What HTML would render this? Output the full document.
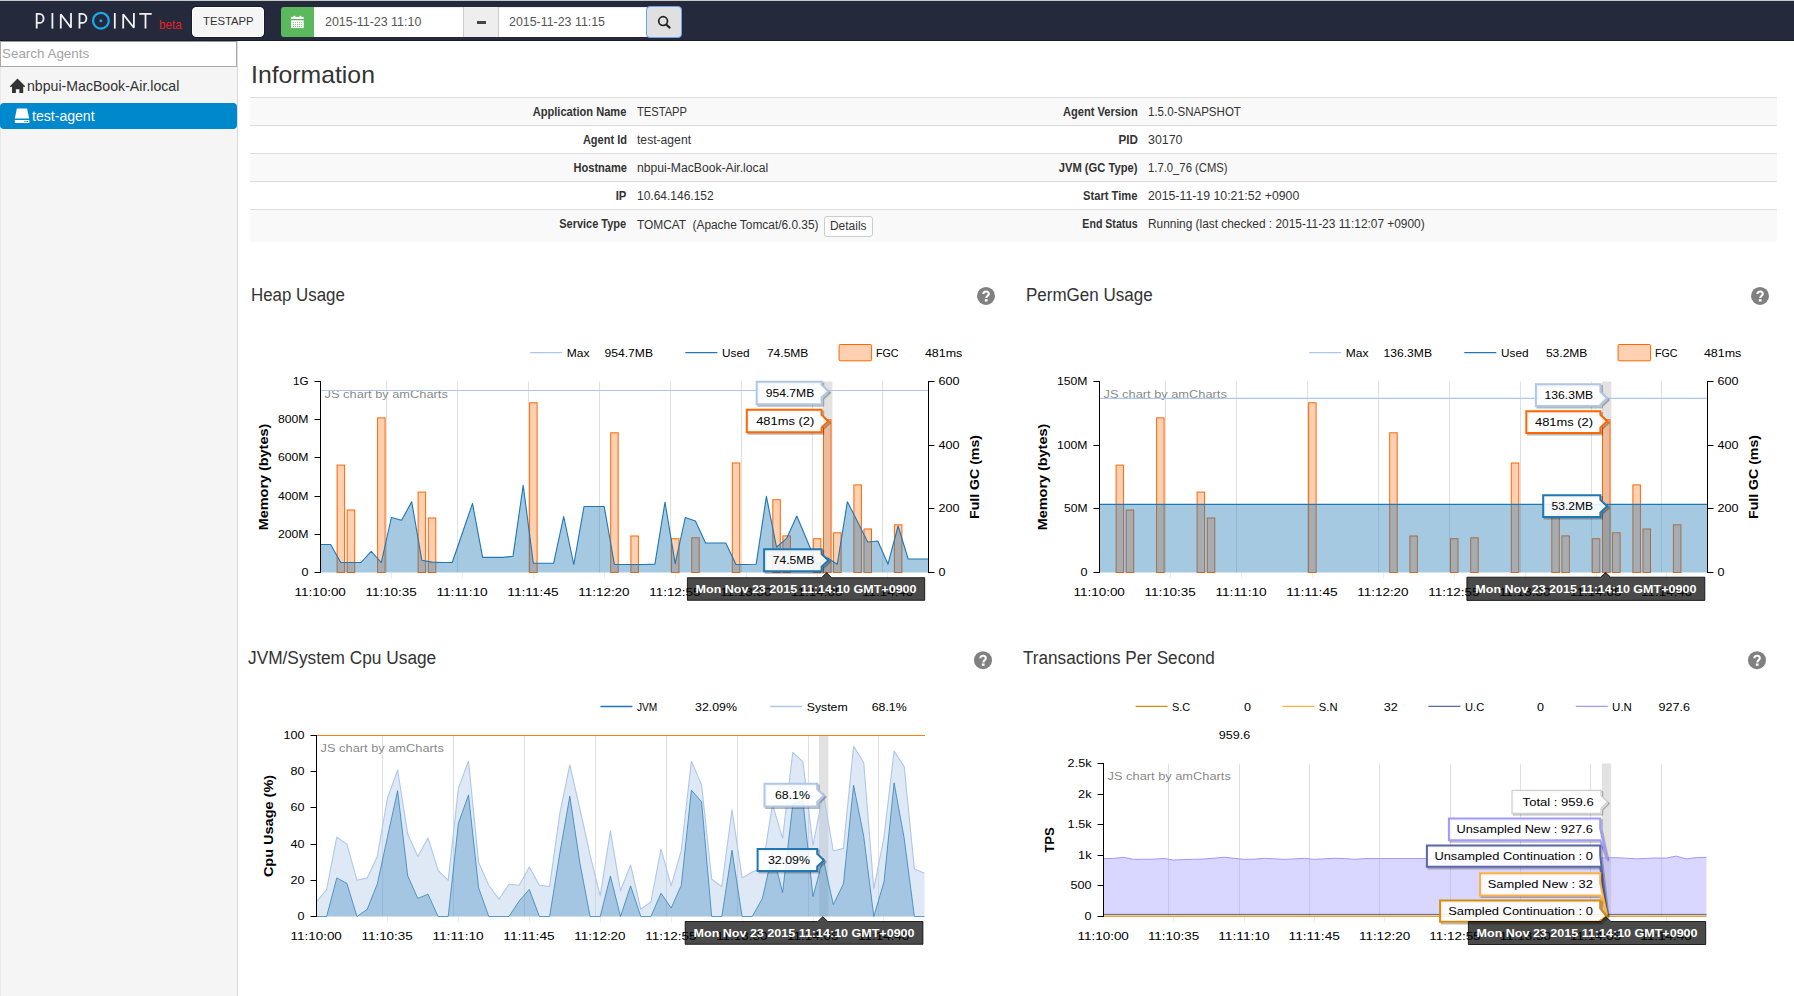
<!DOCTYPE html>
<html lang="en"><head><meta charset="utf-8"><title>Pinpoint - Inspector</title>
<style>
*{box-sizing:border-box}
html,body{margin:0;padding:0}
body{width:1794px;height:996px;overflow:hidden;position:relative;background:#fff;font-family:"Liberation Sans",sans-serif;color:#333}
.t{position:absolute;white-space:pre;line-height:1;font-family:"Liberation Sans",sans-serif}
.abs{position:absolute}
svg{position:absolute;left:0;top:0;overflow:visible}
svg text{font-family:"Liberation Sans",sans-serif}
#nav{position:absolute;left:0;top:0;width:1794px;height:41px;background:#24293b;border-top:1px solid #c9c9c9;border-bottom:1px solid #161b2e}
#side{position:absolute;left:0;top:41px;width:238px;height:955px;background:#f5f5f5;border-right:1px solid #dcdcdc;border-left:1px solid #e9e9e9}
.row{position:absolute;left:250px;width:1527px;border-top:1px solid #ddd}
.odd{background:#f9f9f9}
</style></head><body>

<div id="nav"></div>
<svg width="1794" height="41" viewBox="0 0 1794 41">
<g fill="none" stroke="#f2f2f2" stroke-width="1.8" stroke-linecap="butt" stroke-linejoin="bevel">
<path stroke-linejoin="miter" d="M36.7 28.6V13.9h2.6a4.3 4.5 0 0 1 0 9h-2.6"/>
<path d="M52.4 13V28.6"/>
<path d="M60.8 28.6V14.2l10.2 13.6V13"/>
<path stroke-linejoin="miter" d="M79.5 28.6V13.9h2.6a4.3 4.5 0 0 1 0 9h-2.6"/>
<path d="M114.8 13V28.6"/>
<path d="M123.2 28.6V14.2l10.7 13.6V13"/>
<path d="M139.3 13.9h12.4M145.5 13.9V28.6"/>
</g>
<circle cx="100.9" cy="20.7" r="7.9" fill="none" stroke="#1ea7ee" stroke-width="2.2"/>
<circle cx="100.9" cy="20.7" r="1.5" fill="#1ea7ee"/>
</svg>
<span class="t" style="left:158.60px;transform-origin:0 0;top:18.96px;font-size:12.8px;transform:scaleX(0.9153);color:#e02626;">beta</span>
<div class="abs" style="left:192px;top:7px;width:72px;height:30px;background:#f5f5f5;border:1px solid #fff;border-radius:4px;box-shadow:0 0 0 1px rgba(8,12,30,.45)"></div>
<span class="t" style="left:202.60px;transform-origin:0 0;top:16.11px;font-size:11.8px;transform:scaleX(0.9566);color:#333;">TESTAPP</span>
<div class="abs" style="left:281px;top:7px;width:33px;height:30px;background:#5cb85c;border-radius:3px 0 0 3px"></div>
<svg width="1794" height="41" viewBox="0 0 1794 41">
<g fill="#fff">
<rect x="291.1" y="16.9" width="12.6" height="2.1"/>
<rect x="293.4" y="15.8" width="2" height="2" rx=".6"/><rect x="299.4" y="15.8" width="2" height="2" rx=".6"/>
<rect x="291.1" y="20.3" width="12.6" height="7.8"/>
</g>
<g fill="#7cc67c">

<rect x="292.90" y="22.10" width="1" height="1"/>
<rect x="294.95" y="22.10" width="1" height="1"/>
<rect x="297.00" y="22.10" width="1" height="1"/>
<rect x="299.05" y="22.10" width="1" height="1"/>
<rect x="301.10" y="22.10" width="1" height="1"/>
<rect x="292.90" y="24.05" width="1" height="1"/>
<rect x="294.95" y="24.05" width="1" height="1"/>
<rect x="297.00" y="24.05" width="1" height="1"/>
<rect x="299.05" y="24.05" width="1" height="1"/>
<rect x="301.10" y="24.05" width="1" height="1"/>
<rect x="292.90" y="26.00" width="1" height="1"/>
<rect x="294.95" y="26.00" width="1" height="1"/>
<rect x="297.00" y="26.00" width="1" height="1"/>
<rect x="299.05" y="26.00" width="1" height="1"/>
<rect x="301.10" y="26.00" width="1" height="1"/>
</g></svg>
<div class="abs" style="left:314px;top:7px;width:150px;height:30px;background:#fff;box-shadow:inset 0 1px 1px rgba(0,0,0,.09)"></div>
<span class="t" style="left:324.90px;transform-origin:0 0;top:16.04px;font-size:12px;transform:scaleX(1.036);color:#555;">2015-11-23 11:10</span>
<div class="abs" style="left:463px;top:7px;width:36px;height:30px;background:#eee;border-left:1px solid #ccc;border-right:1px solid #ccc"></div>
<div class="abs" style="left:476.7px;top:21.1px;width:9.2px;height:2.8px;background:#444"></div>
<div class="abs" style="left:499px;top:7px;width:148px;height:30px;background:#fff;box-shadow:inset 0 1px 1px rgba(0,0,0,.09)"></div>
<span class="t" style="left:509.00px;transform-origin:0 0;top:16.04px;font-size:12px;transform:scaleX(1.0328);color:#555;">2015-11-23 11:15</span>
<div class="abs" style="left:646.3px;top:6.2px;width:35.3px;height:31.5px;background:#e0e0e0;border:1.6px solid #6ea0f0;border-radius:4px"></div>
<svg width="1794" height="41" viewBox="0 0 1794 41"><circle cx="663.1" cy="21.1" r="4.4" fill="none" stroke="#222" stroke-width="1.7"/><path d="M666.2 24.5L669.6 27.6" stroke="#222" stroke-width="2.1" stroke-linecap="round"/></svg>
<div id="side"></div>
<div class="abs" style="left:0;top:41px;width:237px;height:26px;background:#fff;border:1px solid #a9a9a9;border-top-color:#9a9a9a"></div>
<span class="t" style="left:1.90px;transform-origin:0 0;top:47.29px;font-size:13.6px;transform:scaleX(0.9858);color:#a3a3a3;">Search Agents</span>
<svg width="240" height="140" viewBox="0 0 240 140"><path fill="#333" d="M17.5 78.6L25.2 86.3L24.2 87.3L23.2 86.4V93.1H19.4V89.3H15.9V93.1H12V86.4L10.9 87.3L9.9 86.3Z"/></svg>
<span class="t" style="left:27.20px;transform-origin:0 0;top:79.35px;font-size:14px;transform:scaleX(1.0089);color:#333;">nbpui-MacBook-Air.local</span>
<div class="abs" style="left:0;top:103px;width:237px;height:26px;background:#0088cc;border-radius:4px"></div>
<svg width="240" height="140" viewBox="0 0 240 140"><g fill="#fff"><path d="M16.9 108.5H27L29.2 118.6H14.8Z"/><rect x="14.8" y="120.1" width="14.6" height="2.8" rx=".5"/></g><rect x="24.3" y="121" width="1.4" height="1" fill="#0088cc"/><rect x="26.6" y="121" width="1.4" height="1" fill="#0088cc"/></svg>
<span class="t" style="left:32.40px;transform-origin:0 0;top:109.15px;font-size:14px;transform:scaleX(1.0055);color:#fff;">test-agent</span>
<span class="t" style="left:250.70px;transform-origin:0 0;top:62.78px;font-size:24px;transform:scaleX(1.0321);color:#333;">Information</span>
<div class="row odd" style="top:97px;height:28px"></div>
<div class="row" style="top:125px;height:28px"></div>
<div class="row odd" style="top:153px;height:28px"></div>
<div class="row" style="top:181px;height:28px"></div>
<div class="row odd" style="top:209px;height:33px"></div>
<span class="t" style="right:1167.40px;transform-origin:100% 0;top:105.74px;font-size:12px;transform:scaleX(0.9236);color:#333;font-weight:bold;">Application Name</span>
<span class="t" style="left:637.30px;transform-origin:0 0;top:105.74px;font-size:12px;transform:scaleX(0.9295);color:#333;">TESTAPP</span>
<span class="t" style="right:656.40px;transform-origin:100% 0;top:105.74px;font-size:12px;transform:scaleX(0.9271);color:#333;font-weight:bold;">Agent Version</span>
<span class="t" style="left:1148.30px;transform-origin:0 0;top:105.74px;font-size:12px;transform:scaleX(0.9607);color:#333;">1.5.0-SNAPSHOT</span>
<span class="t" style="right:1167.40px;transform-origin:100% 0;top:133.74px;font-size:12px;transform:scaleX(0.9189);color:#333;font-weight:bold;">Agent Id</span>
<span class="t" style="left:637.30px;transform-origin:0 0;top:133.74px;font-size:12px;transform:scaleX(1.0119);color:#333;">test-agent</span>
<span class="t" style="right:656.40px;transform-origin:100% 0;top:133.74px;font-size:12px;transform:scaleX(0.9698);color:#333;font-weight:bold;">PID</span>
<span class="t" style="left:1148.30px;transform-origin:0 0;top:133.74px;font-size:12px;transform:scaleX(1.034);color:#333;">30170</span>
<span class="t" style="right:1167.40px;transform-origin:100% 0;top:161.74px;font-size:12px;transform:scaleX(0.9222);color:#333;font-weight:bold;">Hostname</span>
<span class="t" style="left:637.30px;transform-origin:0 0;top:161.74px;font-size:12px;transform:scaleX(1.0132);color:#333;">nbpui-MacBook-Air.local</span>
<span class="t" style="right:656.40px;transform-origin:100% 0;top:161.74px;font-size:12px;transform:scaleX(0.932);color:#333;font-weight:bold;">JVM (GC Type)</span>
<span class="t" style="left:1148.30px;transform-origin:0 0;top:161.74px;font-size:12px;transform:scaleX(0.9398);color:#333;">1.7.0_76 (CMS)</span>
<span class="t" style="right:1167.40px;transform-origin:100% 0;top:189.74px;font-size:12px;transform:scaleX(0.9437);color:#333;font-weight:bold;">IP</span>
<span class="t" style="left:637.30px;transform-origin:0 0;top:189.74px;font-size:12px;transform:scaleX(0.9996);color:#333;">10.64.146.152</span>
<span class="t" style="right:656.40px;transform-origin:100% 0;top:189.74px;font-size:12px;transform:scaleX(0.9305);color:#333;font-weight:bold;">Start Time</span>
<span class="t" style="left:1148.30px;transform-origin:0 0;top:189.74px;font-size:12px;transform:scaleX(1.0253);color:#333;">2015-11-19 10:21:52 +0900</span>
<span class="t" style="right:1167.40px;transform-origin:100% 0;top:217.94px;font-size:12px;transform:scaleX(0.9146);color:#333;font-weight:bold;">Service Type</span>
<span class="t" style="left:637.30px;transform-origin:0 0;top:219.14px;font-size:12px;transform:scaleX(0.9909);color:#333;">TOMCAT  (Apache Tomcat/6.0.35)</span>
<span class="t" style="right:656.40px;transform-origin:100% 0;top:217.94px;font-size:12px;transform:scaleX(0.8824);color:#333;font-weight:bold;">End Status</span>
<span class="t" style="left:1148.30px;transform-origin:0 0;top:217.94px;font-size:12px;transform:scaleX(0.99);color:#333;">Running (last checked : 2015-11-23 11:12:07 +0900)</span>
<div class="abs" style="left:824px;top:216px;width:49px;height:21px;background:#fff;border:1px solid #ccc;border-radius:3px"></div>
<span class="t" style="left:830.20px;transform-origin:0 0;top:220.04px;font-size:12px;transform:scaleX(0.9951);color:#333;">Details</span>
<span class="t" style="left:251.00px;transform-origin:0 0;top:285.66px;font-size:18px;transform:scaleX(0.9375);color:#333;">Heap Usage</span>
<span class="t" style="left:1025.50px;transform-origin:0 0;top:285.66px;font-size:18px;transform:scaleX(0.9444);color:#333;">PermGen Usage</span>
<span class="t" style="left:248.30px;transform-origin:0 0;top:649.36px;font-size:18px;transform:scaleX(0.9599);color:#333;">JVM/System Cpu Usage</span>
<span class="t" style="left:1023.20px;transform-origin:0 0;top:649.36px;font-size:18px;transform:scaleX(0.9522);color:#333;">Transactions Per Second</span>
<svg width="1794" height="996" viewBox="0 0 1794 996"><circle cx="986" cy="295.9" r="9" fill="#808080"/><path d="M983.4 294.0A2.7 2.5 0 0 1 988.8 294.0C988.8 295.7 986.3 296.0 986.3 298.1" fill="none" stroke="#fff" stroke-width="2.1"/><rect x="984.8" y="299.2" width="2.8" height="2.3" fill="#fff"/></svg>
<svg width="1794" height="996" viewBox="0 0 1794 996"><circle cx="1760" cy="295.9" r="9" fill="#808080"/><path d="M1757.4 294.0A2.7 2.5 0 0 1 1762.8 294.0C1762.8 295.7 1760.3 296.0 1760.3 298.1" fill="none" stroke="#fff" stroke-width="2.1"/><rect x="1758.8" y="299.2" width="2.8" height="2.3" fill="#fff"/></svg>
<svg width="1794" height="996" viewBox="0 0 1794 996"><circle cx="983" cy="660.2" r="9" fill="#808080"/><path d="M980.4 658.3A2.7 2.5 0 0 1 985.8 658.3C985.8 660.0 983.3 660.3 983.3 662.4" fill="none" stroke="#fff" stroke-width="2.1"/><rect x="981.8" y="663.5" width="2.8" height="2.3" fill="#fff"/></svg>
<svg width="1794" height="996" viewBox="0 0 1794 996"><circle cx="1757" cy="660.2" r="9" fill="#808080"/><path d="M1754.4 658.3A2.7 2.5 0 0 1 1759.8 658.3C1759.8 660.0 1757.3 660.3 1757.3 662.4" fill="none" stroke="#fff" stroke-width="2.1"/><rect x="1755.8" y="663.5" width="2.8" height="2.3" fill="#fff"/></svg>
<svg width="1794" height="996" viewBox="0 0 1794 996">
<path d="M386.5 381.5V572.5" stroke="#000" stroke-opacity=".12" stroke-width="1"/>
<path d="M391.5 572.5V578.5" stroke="#000" stroke-opacity=".07" stroke-width="1"/>
<path d="M457.5 381.5V572.5" stroke="#000" stroke-opacity=".12" stroke-width="1"/>
<path d="M462.5 572.5V578.5" stroke="#000" stroke-opacity=".07" stroke-width="1"/>
<path d="M528.5 381.5V572.5" stroke="#000" stroke-opacity=".12" stroke-width="1"/>
<path d="M533.5 572.5V578.5" stroke="#000" stroke-opacity=".07" stroke-width="1"/>
<path d="M599.5 381.5V572.5" stroke="#000" stroke-opacity=".12" stroke-width="1"/>
<path d="M604.5 572.5V578.5" stroke="#000" stroke-opacity=".07" stroke-width="1"/>
<path d="M670.5 381.5V572.5" stroke="#000" stroke-opacity=".12" stroke-width="1"/>
<path d="M675.5 572.5V578.5" stroke="#000" stroke-opacity=".07" stroke-width="1"/>
<path d="M741.5 381.5V572.5" stroke="#000" stroke-opacity=".12" stroke-width="1"/>
<path d="M746.5 572.5V578.5" stroke="#000" stroke-opacity=".07" stroke-width="1"/>
<path d="M812.5 381.5V572.5" stroke="#000" stroke-opacity=".12" stroke-width="1"/>
<path d="M817.5 572.5V578.5" stroke="#000" stroke-opacity=".07" stroke-width="1"/>
<path d="M882.5 381.5V572.5" stroke="#000" stroke-opacity=".12" stroke-width="1"/>
<path d="M887.5 572.5V578.5" stroke="#000" stroke-opacity=".07" stroke-width="1"/>
<text x="324.60" y="397.80" font-size="11.4" text-anchor="start" textLength="123.20" lengthAdjust="spacingAndGlyphs" fill="#000" fill-opacity="0.5">JS chart by amCharts</text>
<rect x="823.0" y="381.5" width="9.4" height="191.0" fill="#000" fill-opacity=".115"/>
<rect x="337.1" y="465.1" width="7.5" height="107.4" fill="#ff6600" fill-opacity=".3" stroke="#ff6600" stroke-width="1"/>
<rect x="347.2" y="510.0" width="7.5" height="62.5" fill="#ff6600" fill-opacity=".3" stroke="#ff6600" stroke-width="1"/>
<rect x="377.6" y="417.9" width="7.5" height="154.6" fill="#ff6600" fill-opacity=".3" stroke="#ff6600" stroke-width="1"/>
<rect x="418.1" y="492.1" width="7.5" height="80.4" fill="#ff6600" fill-opacity=".3" stroke="#ff6600" stroke-width="1"/>
<rect x="428.3" y="518.0" width="7.5" height="54.5" fill="#ff6600" fill-opacity=".3" stroke="#ff6600" stroke-width="1"/>
<rect x="529.6" y="402.8" width="7.5" height="169.7" fill="#ff6600" fill-opacity=".3" stroke="#ff6600" stroke-width="1"/>
<rect x="610.7" y="432.8" width="7.5" height="139.7" fill="#ff6600" fill-opacity=".3" stroke="#ff6600" stroke-width="1"/>
<rect x="630.9" y="536.0" width="7.5" height="36.5" fill="#ff6600" fill-opacity=".3" stroke="#ff6600" stroke-width="1"/>
<rect x="671.5" y="538.7" width="7.5" height="33.8" fill="#ff6600" fill-opacity=".3" stroke="#ff6600" stroke-width="1"/>
<rect x="691.7" y="537.8" width="7.5" height="34.7" fill="#ff6600" fill-opacity=".3" stroke="#ff6600" stroke-width="1"/>
<rect x="732.3" y="463.0" width="7.5" height="109.5" fill="#ff6600" fill-opacity=".3" stroke="#ff6600" stroke-width="1"/>
<rect x="772.8" y="499.7" width="7.5" height="72.8" fill="#ff6600" fill-opacity=".3" stroke="#ff6600" stroke-width="1"/>
<rect x="782.9" y="535.9" width="7.5" height="36.6" fill="#ff6600" fill-opacity=".3" stroke="#ff6600" stroke-width="1"/>
<rect x="813.3" y="538.7" width="7.5" height="33.8" fill="#ff6600" fill-opacity=".3" stroke="#ff6600" stroke-width="1"/>
<rect x="823.5" y="419.8" width="7.5" height="152.7" fill="#ff6600" fill-opacity=".3" stroke="#ff6600" stroke-width="1"/>
<rect x="833.6" y="532.8" width="7.5" height="39.7" fill="#ff6600" fill-opacity=".3" stroke="#ff6600" stroke-width="1"/>
<rect x="853.9" y="484.9" width="7.5" height="87.6" fill="#ff6600" fill-opacity=".3" stroke="#ff6600" stroke-width="1"/>
<rect x="864.0" y="529.0" width="7.5" height="43.5" fill="#ff6600" fill-opacity=".3" stroke="#ff6600" stroke-width="1"/>
<rect x="894.4" y="524.8" width="7.5" height="47.7" fill="#ff6600" fill-opacity=".3" stroke="#ff6600" stroke-width="1"/>
<path d="M320.5 390.5H928.5" stroke="#aec7e8" stroke-width="1.1"/>
<polygon points="320.5,572.5 320.5,544.5 330.6,544.5 340.8,562.5 350.9,562.5 361.0,562.5 371.2,551.4 381.3,562.5 391.4,517.5 401.6,520.2 411.7,501.8 421.8,560.2 432.0,562.1 442.1,562.5 452.2,562.5 462.4,533.0 472.5,503.4 482.6,557.4 492.8,557.4 502.9,557.4 513.0,556.3 523.2,485.4 533.3,563.3 543.4,563.3 553.6,563.3 563.7,516.5 573.8,564.5 584.0,506.5 594.1,506.5 604.2,506.5 614.4,564.5 624.5,564.5 634.6,564.5 644.8,564.5 654.9,564.1 665.0,502.2 675.2,563.7 685.3,517.5 695.4,521.0 705.6,543.0 715.7,543.0 725.8,543.0 736.0,564.5 746.1,564.5 756.2,564.2 766.4,496.3 776.5,547.2 786.6,538.4 796.8,516.0 806.9,540.0 817.0,564.5 827.2,557.8 837.3,564.2 847.4,501.7 857.6,521.8 867.7,542.0 877.8,541.0 888.0,564.2 898.1,526.0 908.2,559.0 918.4,559.0 928.5,559.0 928.5,572.5" fill="#1f77b4" fill-opacity=".4"/>
<polyline points="320.5,544.5 330.6,544.5 340.8,562.5 350.9,562.5 361.0,562.5 371.2,551.4 381.3,562.5 391.4,517.5 401.6,520.2 411.7,501.8 421.8,560.2 432.0,562.1 442.1,562.5 452.2,562.5 462.4,533.0 472.5,503.4 482.6,557.4 492.8,557.4 502.9,557.4 513.0,556.3 523.2,485.4 533.3,563.3 543.4,563.3 553.6,563.3 563.7,516.5 573.8,564.5 584.0,506.5 594.1,506.5 604.2,506.5 614.4,564.5 624.5,564.5 634.6,564.5 644.8,564.5 654.9,564.1 665.0,502.2 675.2,563.7 685.3,517.5 695.4,521.0 705.6,543.0 715.7,543.0 725.8,543.0 736.0,564.5 746.1,564.5 756.2,564.2 766.4,496.3 776.5,547.2 786.6,538.4 796.8,516.0 806.9,540.0 817.0,564.5 827.2,557.8 837.3,564.2 847.4,501.7 857.6,521.8 867.7,542.0 877.8,541.0 888.0,564.2 898.1,526.0 908.2,559.0 918.4,559.0 928.5,559.0" fill="none" stroke="#1f77b4" stroke-width="1.1" stroke-linejoin="round"/>
<path d="M320.5 381.5V572.5" stroke="#000" stroke-width="1"/>
<path d="M314.5 381.5H321.0" stroke="#000" stroke-width="1"/>
<text x="308.50" y="385.20" font-size="11.4" text-anchor="end" textLength="15.52" lengthAdjust="spacingAndGlyphs" fill="#000">1G</text>
<path d="M314.5 419.5H321.0" stroke="#000" stroke-width="1"/>
<text x="308.50" y="423.20" font-size="11.4" text-anchor="end" textLength="30.49" lengthAdjust="spacingAndGlyphs" fill="#000">800M</text>
<path d="M314.5 457.5H321.0" stroke="#000" stroke-width="1"/>
<text x="308.50" y="461.20" font-size="11.4" text-anchor="end" textLength="30.49" lengthAdjust="spacingAndGlyphs" fill="#000">600M</text>
<path d="M314.5 496.5H321.0" stroke="#000" stroke-width="1"/>
<text x="308.50" y="500.20" font-size="11.4" text-anchor="end" textLength="30.49" lengthAdjust="spacingAndGlyphs" fill="#000">400M</text>
<path d="M314.5 534.5H321.0" stroke="#000" stroke-width="1"/>
<text x="308.50" y="538.20" font-size="11.4" text-anchor="end" textLength="30.49" lengthAdjust="spacingAndGlyphs" fill="#000">200M</text>
<path d="M314.5 572.5H321.0" stroke="#000" stroke-width="1"/>
<text x="308.50" y="576.20" font-size="11.4" text-anchor="end" textLength="7.00" lengthAdjust="spacingAndGlyphs" fill="#000">0</text>
<text x="267.50" y="477.00" font-size="12.4" text-anchor="middle" textLength="106.50" lengthAdjust="spacingAndGlyphs" fill="#000" font-weight="bold" transform="rotate(-90 267.50 477.00)">Memory (bytes)</text>
<path d="M928.5 381.5V572.5" stroke="#000" stroke-width="1"/>
<path d="M928.0 381.5H934.5" stroke="#000" stroke-width="1"/>
<text x="938.50" y="385.20" font-size="11.4" text-anchor="start" textLength="21.00" lengthAdjust="spacingAndGlyphs" fill="#000">600</text>
<path d="M928.0 445.5H934.5" stroke="#000" stroke-width="1"/>
<text x="938.50" y="449.20" font-size="11.4" text-anchor="start" textLength="21.00" lengthAdjust="spacingAndGlyphs" fill="#000">400</text>
<path d="M928.0 508.5H934.5" stroke="#000" stroke-width="1"/>
<text x="938.50" y="512.20" font-size="11.4" text-anchor="start" textLength="21.00" lengthAdjust="spacingAndGlyphs" fill="#000">200</text>
<path d="M928.0 572.5H934.5" stroke="#000" stroke-width="1"/>
<text x="938.50" y="576.20" font-size="11.4" text-anchor="start" textLength="7.00" lengthAdjust="spacingAndGlyphs" fill="#000">0</text>
<text x="979.00" y="477.00" font-size="12.4" text-anchor="middle" textLength="84.00" lengthAdjust="spacingAndGlyphs" fill="#000" font-weight="bold" transform="rotate(-90 979.00 477.00)">Full GC (ms)</text>
<text x="320.20" y="595.80" font-size="11.4" text-anchor="middle" textLength="51.30" lengthAdjust="spacingAndGlyphs" fill="#000">11:10:00</text>
<text x="391.13" y="595.80" font-size="11.4" text-anchor="middle" textLength="51.30" lengthAdjust="spacingAndGlyphs" fill="#000">11:10:35</text>
<text x="462.07" y="595.80" font-size="11.4" text-anchor="middle" textLength="51.30" lengthAdjust="spacingAndGlyphs" fill="#000">11:11:10</text>
<text x="533.00" y="595.80" font-size="11.4" text-anchor="middle" textLength="51.30" lengthAdjust="spacingAndGlyphs" fill="#000">11:11:45</text>
<text x="603.93" y="595.80" font-size="11.4" text-anchor="middle" textLength="51.30" lengthAdjust="spacingAndGlyphs" fill="#000">11:12:20</text>
<text x="674.87" y="595.80" font-size="11.4" text-anchor="middle" textLength="51.30" lengthAdjust="spacingAndGlyphs" fill="#000">11:12:55</text>
<text x="745.80" y="595.80" font-size="11.4" text-anchor="middle" textLength="51.30" lengthAdjust="spacingAndGlyphs" fill="#000">11:13:30</text>
<text x="816.73" y="595.80" font-size="11.4" text-anchor="middle" textLength="51.30" lengthAdjust="spacingAndGlyphs" fill="#000">11:14:05</text>
<text x="887.67" y="595.80" font-size="11.4" text-anchor="middle" textLength="51.30" lengthAdjust="spacingAndGlyphs" fill="#000">11:14:40</text>
<path d="M530.2 352.7H562.2" stroke="#aec7e8" stroke-width="1.3"/>
<text x="566.80" y="356.90" font-size="11.4" text-anchor="start" textLength="22.74" lengthAdjust="spacingAndGlyphs" fill="#000">Max</text>
<text x="604.50" y="356.90" font-size="11.4" text-anchor="start" textLength="48.53" lengthAdjust="spacingAndGlyphs" fill="#000">954.7MB</text>
<path d="M685.3 352.7H717.3" stroke="#1f77b4" stroke-width="1.3"/>
<text x="722.00" y="356.90" font-size="11.4" text-anchor="start" textLength="27.53" lengthAdjust="spacingAndGlyphs" fill="#000">Used</text>
<text x="766.90" y="356.90" font-size="11.4" text-anchor="start" textLength="41.53" lengthAdjust="spacingAndGlyphs" fill="#000">74.5MB</text>
<rect x="839.1" y="344.5" width="32.5" height="16.3" fill="#ff6600" fill-opacity=".3" stroke="#ff6600" stroke-width="1" rx="1"/>
<text x="876.00" y="356.90" font-size="11.4" text-anchor="start" textLength="22.53" lengthAdjust="spacingAndGlyphs" fill="#000">FGC</text>
<text x="924.90" y="356.90" font-size="11.4" text-anchor="start" textLength="37.44" lengthAdjust="spacingAndGlyphs" fill="#000">481ms</text>
<path d="M756.7 381.8H821.6V384.7L828.3 391.1L821.6 397.5V404.2H756.7Z" transform="translate(1.6 1.6)" fill="none" stroke="#000" stroke-opacity=".28" stroke-width="2"/>
<path d="M756.7 381.8H821.6V384.7L828.3 391.1L821.6 397.5V404.2H756.7Z" fill="#fff" fill-opacity="0.88" stroke="#aec7e8" stroke-width="2" stroke-linejoin="miter"/>
<text x="765.77" y="397.00" font-size="11.4" text-anchor="start" textLength="48.53" lengthAdjust="spacingAndGlyphs" fill="#000">954.7MB</text>
<path d="M746.8 409.8H821.6V414.9L828.3 421.3L821.6 427.7V432.2H746.8Z" transform="translate(1.6 1.6)" fill="none" stroke="#000" stroke-opacity=".28" stroke-width="2"/>
<path d="M746.8 409.8H821.6V414.9L828.3 421.3L821.6 427.7V432.2H746.8Z" fill="#fff" fill-opacity="0.88" stroke="#ff6600" stroke-width="2" stroke-linejoin="miter"/>
<text x="756.18" y="425.00" font-size="11.4" text-anchor="start" textLength="58.12" lengthAdjust="spacingAndGlyphs" fill="#000">481ms (2)</text>
<path d="M764.1 549.2H821.6V554.0L828.3 560.4L821.6 566.8V571.2H764.1Z" transform="translate(1.6 1.6)" fill="none" stroke="#000" stroke-opacity=".28" stroke-width="2"/>
<path d="M764.1 549.2H821.6V554.0L828.3 560.4L821.6 566.8V571.2H764.1Z" fill="#fff" fill-opacity="0.88" stroke="#1f77b4" stroke-width="2" stroke-linejoin="miter"/>
<text x="772.77" y="564.20" font-size="11.4" text-anchor="start" textLength="41.53" lengthAdjust="spacingAndGlyphs" fill="#000">74.5MB</text>
<path d="M687.4 577.7H821.6L826.6 572.6L831.6 577.7H924.7V600.3H687.4Z" fill="#000" fill-opacity=".71" stroke="#000" stroke-opacity=".8" stroke-width="1"/>
<text x="806.05" y="592.80" font-size="10.4" text-anchor="middle" textLength="221.00" lengthAdjust="spacingAndGlyphs" fill="#fff" font-weight="bold">Mon Nov 23 2015 11:14:10 GMT+0900</text>
<path d="M1165.5 381.5V572.5" stroke="#000" stroke-opacity=".12" stroke-width="1"/>
<path d="M1170.5 572.5V578.5" stroke="#000" stroke-opacity=".07" stroke-width="1"/>
<path d="M1236.5 381.5V572.5" stroke="#000" stroke-opacity=".12" stroke-width="1"/>
<path d="M1241.5 572.5V578.5" stroke="#000" stroke-opacity=".07" stroke-width="1"/>
<path d="M1307.5 381.5V572.5" stroke="#000" stroke-opacity=".12" stroke-width="1"/>
<path d="M1312.5 572.5V578.5" stroke="#000" stroke-opacity=".07" stroke-width="1"/>
<path d="M1378.5 381.5V572.5" stroke="#000" stroke-opacity=".12" stroke-width="1"/>
<path d="M1383.5 572.5V578.5" stroke="#000" stroke-opacity=".07" stroke-width="1"/>
<path d="M1449.5 381.5V572.5" stroke="#000" stroke-opacity=".12" stroke-width="1"/>
<path d="M1454.5 572.5V578.5" stroke="#000" stroke-opacity=".07" stroke-width="1"/>
<path d="M1520.5 381.5V572.5" stroke="#000" stroke-opacity=".12" stroke-width="1"/>
<path d="M1525.5 572.5V578.5" stroke="#000" stroke-opacity=".07" stroke-width="1"/>
<path d="M1591.5 381.5V572.5" stroke="#000" stroke-opacity=".12" stroke-width="1"/>
<path d="M1596.5 572.5V578.5" stroke="#000" stroke-opacity=".07" stroke-width="1"/>
<path d="M1661.5 381.5V572.5" stroke="#000" stroke-opacity=".12" stroke-width="1"/>
<path d="M1666.5 572.5V578.5" stroke="#000" stroke-opacity=".07" stroke-width="1"/>
<text x="1103.60" y="397.80" font-size="11.4" text-anchor="start" textLength="123.20" lengthAdjust="spacingAndGlyphs" fill="#000" fill-opacity="0.5">JS chart by amCharts</text>
<rect x="1602.0" y="381.5" width="9.4" height="191.0" fill="#000" fill-opacity=".115"/>
<rect x="1116.1" y="465.1" width="7.5" height="107.4" fill="#ff6600" fill-opacity=".3" stroke="#ff6600" stroke-width="1"/>
<rect x="1126.2" y="510.0" width="7.5" height="62.5" fill="#ff6600" fill-opacity=".3" stroke="#ff6600" stroke-width="1"/>
<rect x="1156.6" y="417.9" width="7.5" height="154.6" fill="#ff6600" fill-opacity=".3" stroke="#ff6600" stroke-width="1"/>
<rect x="1197.1" y="492.1" width="7.5" height="80.4" fill="#ff6600" fill-opacity=".3" stroke="#ff6600" stroke-width="1"/>
<rect x="1207.3" y="518.0" width="7.5" height="54.5" fill="#ff6600" fill-opacity=".3" stroke="#ff6600" stroke-width="1"/>
<rect x="1308.6" y="402.8" width="7.5" height="169.7" fill="#ff6600" fill-opacity=".3" stroke="#ff6600" stroke-width="1"/>
<rect x="1389.7" y="432.8" width="7.5" height="139.7" fill="#ff6600" fill-opacity=".3" stroke="#ff6600" stroke-width="1"/>
<rect x="1409.9" y="536.0" width="7.5" height="36.5" fill="#ff6600" fill-opacity=".3" stroke="#ff6600" stroke-width="1"/>
<rect x="1450.5" y="538.7" width="7.5" height="33.8" fill="#ff6600" fill-opacity=".3" stroke="#ff6600" stroke-width="1"/>
<rect x="1470.7" y="537.8" width="7.5" height="34.7" fill="#ff6600" fill-opacity=".3" stroke="#ff6600" stroke-width="1"/>
<rect x="1511.3" y="463.0" width="7.5" height="109.5" fill="#ff6600" fill-opacity=".3" stroke="#ff6600" stroke-width="1"/>
<rect x="1551.8" y="499.7" width="7.5" height="72.8" fill="#ff6600" fill-opacity=".3" stroke="#ff6600" stroke-width="1"/>
<rect x="1561.9" y="535.9" width="7.5" height="36.6" fill="#ff6600" fill-opacity=".3" stroke="#ff6600" stroke-width="1"/>
<rect x="1592.3" y="538.7" width="7.5" height="33.8" fill="#ff6600" fill-opacity=".3" stroke="#ff6600" stroke-width="1"/>
<rect x="1602.5" y="419.8" width="7.5" height="152.7" fill="#ff6600" fill-opacity=".3" stroke="#ff6600" stroke-width="1"/>
<rect x="1612.6" y="532.8" width="7.5" height="39.7" fill="#ff6600" fill-opacity=".3" stroke="#ff6600" stroke-width="1"/>
<rect x="1632.9" y="484.9" width="7.5" height="87.6" fill="#ff6600" fill-opacity=".3" stroke="#ff6600" stroke-width="1"/>
<rect x="1643.0" y="529.0" width="7.5" height="43.5" fill="#ff6600" fill-opacity=".3" stroke="#ff6600" stroke-width="1"/>
<rect x="1673.4" y="524.8" width="7.5" height="47.7" fill="#ff6600" fill-opacity=".3" stroke="#ff6600" stroke-width="1"/>
<path d="M1099.5 398.4H1707.5" stroke="#aec7e8" stroke-width="1.1"/>
<polygon points="1099.5,572.5 1099.5,504.4 1109.6,504.4 1119.8,504.4 1129.9,504.4 1140.0,504.4 1150.2,504.4 1160.3,504.4 1170.4,504.4 1180.6,504.4 1190.7,504.4 1200.8,504.4 1211.0,504.4 1221.1,504.4 1231.2,504.4 1241.4,504.4 1251.5,504.4 1261.6,504.4 1271.8,504.4 1281.9,504.4 1292.0,504.4 1302.2,504.4 1312.3,504.4 1322.4,504.4 1332.6,504.4 1342.7,504.4 1352.8,504.4 1363.0,504.4 1373.1,504.4 1383.2,504.4 1393.4,504.4 1403.5,504.4 1413.6,504.4 1423.8,504.4 1433.9,504.4 1444.0,504.4 1454.2,504.4 1464.3,504.4 1474.4,504.4 1484.6,504.4 1494.7,504.4 1504.8,504.4 1515.0,504.4 1525.1,504.4 1535.2,504.4 1545.4,504.4 1555.5,504.4 1565.6,504.4 1575.8,504.4 1585.9,504.4 1596.0,504.4 1606.2,504.4 1616.3,504.4 1626.4,504.4 1636.6,504.4 1646.7,504.4 1656.8,504.4 1667.0,504.4 1677.1,504.4 1687.2,504.4 1697.4,504.4 1707.5,504.4 1707.5,572.5" fill="#1f77b4" fill-opacity=".4"/>
<polyline points="1099.5,504.4 1109.6,504.4 1119.8,504.4 1129.9,504.4 1140.0,504.4 1150.2,504.4 1160.3,504.4 1170.4,504.4 1180.6,504.4 1190.7,504.4 1200.8,504.4 1211.0,504.4 1221.1,504.4 1231.2,504.4 1241.4,504.4 1251.5,504.4 1261.6,504.4 1271.8,504.4 1281.9,504.4 1292.0,504.4 1302.2,504.4 1312.3,504.4 1322.4,504.4 1332.6,504.4 1342.7,504.4 1352.8,504.4 1363.0,504.4 1373.1,504.4 1383.2,504.4 1393.4,504.4 1403.5,504.4 1413.6,504.4 1423.8,504.4 1433.9,504.4 1444.0,504.4 1454.2,504.4 1464.3,504.4 1474.4,504.4 1484.6,504.4 1494.7,504.4 1504.8,504.4 1515.0,504.4 1525.1,504.4 1535.2,504.4 1545.4,504.4 1555.5,504.4 1565.6,504.4 1575.8,504.4 1585.9,504.4 1596.0,504.4 1606.2,504.4 1616.3,504.4 1626.4,504.4 1636.6,504.4 1646.7,504.4 1656.8,504.4 1667.0,504.4 1677.1,504.4 1687.2,504.4 1697.4,504.4 1707.5,504.4" fill="none" stroke="#1f77b4" stroke-width="1.1" stroke-linejoin="round"/>
<path d="M1099.5 381.5V572.5" stroke="#000" stroke-width="1"/>
<path d="M1093.5 381.5H1100.0" stroke="#000" stroke-width="1"/>
<text x="1087.50" y="385.20" font-size="11.4" text-anchor="end" textLength="30.49" lengthAdjust="spacingAndGlyphs" fill="#000">150M</text>
<path d="M1093.5 445.5H1100.0" stroke="#000" stroke-width="1"/>
<text x="1087.50" y="449.20" font-size="11.4" text-anchor="end" textLength="30.49" lengthAdjust="spacingAndGlyphs" fill="#000">100M</text>
<path d="M1093.5 508.5H1100.0" stroke="#000" stroke-width="1"/>
<text x="1087.50" y="512.20" font-size="11.4" text-anchor="end" textLength="23.49" lengthAdjust="spacingAndGlyphs" fill="#000">50M</text>
<path d="M1093.5 572.5H1100.0" stroke="#000" stroke-width="1"/>
<text x="1087.50" y="576.20" font-size="11.4" text-anchor="end" textLength="7.00" lengthAdjust="spacingAndGlyphs" fill="#000">0</text>
<text x="1046.50" y="477.00" font-size="12.4" text-anchor="middle" textLength="106.50" lengthAdjust="spacingAndGlyphs" fill="#000" font-weight="bold" transform="rotate(-90 1046.50 477.00)">Memory (bytes)</text>
<path d="M1707.5 381.5V572.5" stroke="#000" stroke-width="1"/>
<path d="M1707.0 381.5H1713.5" stroke="#000" stroke-width="1"/>
<text x="1717.50" y="385.20" font-size="11.4" text-anchor="start" textLength="21.00" lengthAdjust="spacingAndGlyphs" fill="#000">600</text>
<path d="M1707.0 445.5H1713.5" stroke="#000" stroke-width="1"/>
<text x="1717.50" y="449.20" font-size="11.4" text-anchor="start" textLength="21.00" lengthAdjust="spacingAndGlyphs" fill="#000">400</text>
<path d="M1707.0 508.5H1713.5" stroke="#000" stroke-width="1"/>
<text x="1717.50" y="512.20" font-size="11.4" text-anchor="start" textLength="21.00" lengthAdjust="spacingAndGlyphs" fill="#000">200</text>
<path d="M1707.0 572.5H1713.5" stroke="#000" stroke-width="1"/>
<text x="1717.50" y="576.20" font-size="11.4" text-anchor="start" textLength="7.00" lengthAdjust="spacingAndGlyphs" fill="#000">0</text>
<text x="1758.00" y="477.00" font-size="12.4" text-anchor="middle" textLength="84.00" lengthAdjust="spacingAndGlyphs" fill="#000" font-weight="bold" transform="rotate(-90 1758.00 477.00)">Full GC (ms)</text>
<text x="1099.20" y="595.80" font-size="11.4" text-anchor="middle" textLength="51.30" lengthAdjust="spacingAndGlyphs" fill="#000">11:10:00</text>
<text x="1170.13" y="595.80" font-size="11.4" text-anchor="middle" textLength="51.30" lengthAdjust="spacingAndGlyphs" fill="#000">11:10:35</text>
<text x="1241.07" y="595.80" font-size="11.4" text-anchor="middle" textLength="51.30" lengthAdjust="spacingAndGlyphs" fill="#000">11:11:10</text>
<text x="1312.00" y="595.80" font-size="11.4" text-anchor="middle" textLength="51.30" lengthAdjust="spacingAndGlyphs" fill="#000">11:11:45</text>
<text x="1382.93" y="595.80" font-size="11.4" text-anchor="middle" textLength="51.30" lengthAdjust="spacingAndGlyphs" fill="#000">11:12:20</text>
<text x="1453.87" y="595.80" font-size="11.4" text-anchor="middle" textLength="51.30" lengthAdjust="spacingAndGlyphs" fill="#000">11:12:55</text>
<text x="1524.80" y="595.80" font-size="11.4" text-anchor="middle" textLength="51.30" lengthAdjust="spacingAndGlyphs" fill="#000">11:13:30</text>
<text x="1595.73" y="595.80" font-size="11.4" text-anchor="middle" textLength="51.30" lengthAdjust="spacingAndGlyphs" fill="#000">11:14:05</text>
<text x="1666.67" y="595.80" font-size="11.4" text-anchor="middle" textLength="51.30" lengthAdjust="spacingAndGlyphs" fill="#000">11:14:40</text>
<path d="M1309.2 352.7H1341.2" stroke="#aec7e8" stroke-width="1.3"/>
<text x="1345.80" y="356.90" font-size="11.4" text-anchor="start" textLength="22.74" lengthAdjust="spacingAndGlyphs" fill="#000">Max</text>
<text x="1383.50" y="356.90" font-size="11.4" text-anchor="start" textLength="48.53" lengthAdjust="spacingAndGlyphs" fill="#000">136.3MB</text>
<path d="M1464.3 352.7H1496.3" stroke="#1f77b4" stroke-width="1.3"/>
<text x="1501.00" y="356.90" font-size="11.4" text-anchor="start" textLength="27.53" lengthAdjust="spacingAndGlyphs" fill="#000">Used</text>
<text x="1545.90" y="356.90" font-size="11.4" text-anchor="start" textLength="41.53" lengthAdjust="spacingAndGlyphs" fill="#000">53.2MB</text>
<rect x="1618.1" y="344.5" width="32.5" height="16.3" fill="#ff6600" fill-opacity=".3" stroke="#ff6600" stroke-width="1" rx="1"/>
<text x="1655.00" y="356.90" font-size="11.4" text-anchor="start" textLength="22.53" lengthAdjust="spacingAndGlyphs" fill="#000">FGC</text>
<text x="1703.90" y="356.90" font-size="11.4" text-anchor="start" textLength="37.44" lengthAdjust="spacingAndGlyphs" fill="#000">481ms</text>
<path d="M1535.9 384.3H1600.4V391.9L1607.1 398.3L1600.4 404.7V405.9H1535.9Z" transform="translate(1.6 1.6)" fill="none" stroke="#000" stroke-opacity=".28" stroke-width="2"/>
<path d="M1535.9 384.3H1600.4V391.9L1607.1 398.3L1600.4 404.7V405.9H1535.9Z" fill="#fff" fill-opacity="0.88" stroke="#aec7e8" stroke-width="2" stroke-linejoin="miter"/>
<text x="1544.57" y="399.10" font-size="11.4" text-anchor="start" textLength="48.53" lengthAdjust="spacingAndGlyphs" fill="#000">136.3MB</text>
<path d="M1526.3 411.2H1600.4V414.8L1607.1 421.2L1600.4 427.6V432.9H1526.3Z" transform="translate(1.6 1.6)" fill="none" stroke="#000" stroke-opacity=".28" stroke-width="2"/>
<path d="M1526.3 411.2H1600.4V414.8L1607.1 421.2L1600.4 427.6V432.9H1526.3Z" fill="#fff" fill-opacity="0.88" stroke="#ff6600" stroke-width="2" stroke-linejoin="miter"/>
<text x="1534.98" y="426.05" font-size="11.4" text-anchor="start" textLength="58.12" lengthAdjust="spacingAndGlyphs" fill="#000">481ms (2)</text>
<path d="M1543.2 495.3H1600.4V499.9L1607.1 506.3L1600.4 512.7V517.0H1543.2Z" transform="translate(1.6 1.6)" fill="none" stroke="#000" stroke-opacity=".28" stroke-width="2"/>
<path d="M1543.2 495.3H1600.4V499.9L1607.1 506.3L1600.4 512.7V517.0H1543.2Z" fill="#fff" fill-opacity="0.88" stroke="#1f77b4" stroke-width="2" stroke-linejoin="miter"/>
<text x="1551.57" y="510.15" font-size="11.4" text-anchor="start" textLength="41.53" lengthAdjust="spacingAndGlyphs" fill="#000">53.2MB</text>
<path d="M1466.9 577.2H1600.6L1605.6 572.5L1610.6 577.2H1704.8V600.4H1466.9Z" fill="#000" fill-opacity=".71" stroke="#000" stroke-opacity=".8" stroke-width="1"/>
<text x="1585.85" y="592.60" font-size="10.4" text-anchor="middle" textLength="221.00" lengthAdjust="spacingAndGlyphs" fill="#fff" font-weight="bold">Mon Nov 23 2015 11:14:10 GMT+0900</text>
<path d="M382.5 735.5V916.5" stroke="#000" stroke-opacity=".12" stroke-width="1"/>
<path d="M387.5 916.5V922.5" stroke="#000" stroke-opacity=".07" stroke-width="1"/>
<path d="M453.5 735.5V916.5" stroke="#000" stroke-opacity=".12" stroke-width="1"/>
<path d="M458.5 916.5V922.5" stroke="#000" stroke-opacity=".07" stroke-width="1"/>
<path d="M524.5 735.5V916.5" stroke="#000" stroke-opacity=".12" stroke-width="1"/>
<path d="M529.5 916.5V922.5" stroke="#000" stroke-opacity=".07" stroke-width="1"/>
<path d="M595.5 735.5V916.5" stroke="#000" stroke-opacity=".12" stroke-width="1"/>
<path d="M600.5 916.5V922.5" stroke="#000" stroke-opacity=".07" stroke-width="1"/>
<path d="M666.5 735.5V916.5" stroke="#000" stroke-opacity=".12" stroke-width="1"/>
<path d="M671.5 916.5V922.5" stroke="#000" stroke-opacity=".07" stroke-width="1"/>
<path d="M737.5 735.5V916.5" stroke="#000" stroke-opacity=".12" stroke-width="1"/>
<path d="M742.5 916.5V922.5" stroke="#000" stroke-opacity=".07" stroke-width="1"/>
<path d="M808.5 735.5V916.5" stroke="#000" stroke-opacity=".12" stroke-width="1"/>
<path d="M813.5 916.5V922.5" stroke="#000" stroke-opacity=".07" stroke-width="1"/>
<path d="M878.5 735.5V916.5" stroke="#000" stroke-opacity=".12" stroke-width="1"/>
<path d="M883.5 916.5V922.5" stroke="#000" stroke-opacity=".07" stroke-width="1"/>
<text x="320.60" y="751.80" font-size="11.4" text-anchor="start" textLength="123.20" lengthAdjust="spacingAndGlyphs" fill="#000" fill-opacity="0.5">JS chart by amCharts</text>
<rect x="819.0" y="735.5" width="9.4" height="181.0" fill="#000" fill-opacity=".115"/>
<path d="M316.5 735.5H925.0" stroke="#ff7f0e" stroke-width="1.2"/>
<polygon points="316.5,916.5 316.5,902.0 326.6,889.5 336.8,837.2 346.9,844.1 357.0,880.3 367.2,877.9 377.3,856.4 387.4,798.5 397.6,770.1 407.7,834.0 417.8,856.4 428.0,837.9 438.1,870.3 448.2,880.3 458.4,788.2 468.5,761.2 478.6,862.4 488.8,885.2 498.9,899.3 509.0,884.3 519.2,885.2 529.3,867.1 539.4,885.2 549.6,886.5 559.7,814.2 569.8,764.8 580.0,809.3 590.1,855.1 600.2,896.0 610.4,831.1 620.5,890.8 630.6,865.1 640.8,909.3 650.9,902.0 661.0,849.2 671.2,885.9 681.3,850.3 691.4,761.2 701.6,784.9 711.7,879.2 721.8,886.5 732.0,809.9 742.1,877.9 752.2,872.0 762.4,868.4 772.5,804.3 782.6,838.3 792.8,752.3 802.9,761.7 813.0,845.5 823.2,793.2 833.3,851.0 843.4,848.4 853.6,746.4 863.7,762.5 873.8,888.8 884.0,837.0 894.1,751.1 904.2,766.6 914.4,869.1 924.5,873.2 924.5,916.5" fill="#aec7e8" fill-opacity=".4"/>
<polyline points="316.5,902.0 326.6,889.5 336.8,837.2 346.9,844.1 357.0,880.3 367.2,877.9 377.3,856.4 387.4,798.5 397.6,770.1 407.7,834.0 417.8,856.4 428.0,837.9 438.1,870.3 448.2,880.3 458.4,788.2 468.5,761.2 478.6,862.4 488.8,885.2 498.9,899.3 509.0,884.3 519.2,885.2 529.3,867.1 539.4,885.2 549.6,886.5 559.7,814.2 569.8,764.8 580.0,809.3 590.1,855.1 600.2,896.0 610.4,831.1 620.5,890.8 630.6,865.1 640.8,909.3 650.9,902.0 661.0,849.2 671.2,885.9 681.3,850.3 691.4,761.2 701.6,784.9 711.7,879.2 721.8,886.5 732.0,809.9 742.1,877.9 752.2,872.0 762.4,868.4 772.5,804.3 782.6,838.3 792.8,752.3 802.9,761.7 813.0,845.5 823.2,793.2 833.3,851.0 843.4,848.4 853.6,746.4 863.7,762.5 873.8,888.8 884.0,837.0 894.1,751.1 904.2,766.6 914.4,869.1 924.5,873.2" fill="none" stroke="#aec7e8" stroke-width="1.1" stroke-linejoin="round"/>
<polygon points="316.5,916.5 316.5,916.5 326.6,916.5 336.8,877.9 346.9,883.4 357.0,916.5 367.2,909.3 377.3,883.9 387.4,837.2 397.6,790.7 407.7,875.6 417.8,898.4 428.0,894.2 438.1,916.5 448.2,916.5 458.4,823.3 468.5,794.9 478.6,887.7 488.8,916.5 498.9,916.5 509.0,916.5 519.2,900.9 529.3,889.4 539.4,916.5 549.6,916.5 559.7,853.9 569.8,796.1 580.0,863.6 590.1,916.5 600.2,916.5 610.4,876.1 620.5,916.5 630.6,885.9 640.8,916.5 650.9,916.5 661.0,893.2 671.2,908.0 681.3,885.2 691.4,790.2 701.6,801.7 711.7,916.5 721.8,916.5 732.0,850.3 742.1,916.5 752.2,916.5 762.4,898.4 772.5,853.1 782.6,892.4 792.8,804.3 802.9,800.7 813.0,896.6 823.2,858.4 833.3,904.6 843.4,883.9 853.6,785.3 863.7,836.0 873.8,916.5 884.0,881.6 894.1,782.9 904.2,838.3 914.4,916.5 924.5,916.5 924.5,916.5" fill="#1f77b4" fill-opacity=".3"/>
<polyline points="316.5,916.5 326.6,916.5 336.8,877.9 346.9,883.4 357.0,916.5 367.2,909.3 377.3,883.9 387.4,837.2 397.6,790.7 407.7,875.6 417.8,898.4 428.0,894.2 438.1,916.5 448.2,916.5 458.4,823.3 468.5,794.9 478.6,887.7 488.8,916.5 498.9,916.5 509.0,916.5 519.2,900.9 529.3,889.4 539.4,916.5 549.6,916.5 559.7,853.9 569.8,796.1 580.0,863.6 590.1,916.5 600.2,916.5 610.4,876.1 620.5,916.5 630.6,885.9 640.8,916.5 650.9,916.5 661.0,893.2 671.2,908.0 681.3,885.2 691.4,790.2 701.6,801.7 711.7,916.5 721.8,916.5 732.0,850.3 742.1,916.5 752.2,916.5 762.4,898.4 772.5,853.1 782.6,892.4 792.8,804.3 802.9,800.7 813.0,896.6 823.2,858.4 833.3,904.6 843.4,883.9 853.6,785.3 863.7,836.0 873.8,916.5 884.0,881.6 894.1,782.9 904.2,838.3 914.4,916.5 924.5,916.5" fill="none" stroke="#1f77b4" stroke-opacity=".7" stroke-width="1" stroke-linejoin="round"/>
<path d="M316.5 735.5V916.5" stroke="#000" stroke-width="1"/>
<path d="M310.5 735.5H317.0" stroke="#000" stroke-width="1"/>
<text x="304.50" y="739.20" font-size="11.4" text-anchor="end" textLength="21.00" lengthAdjust="spacingAndGlyphs" fill="#000">100</text>
<path d="M310.5 771.5H317.0" stroke="#000" stroke-width="1"/>
<text x="304.50" y="775.20" font-size="11.4" text-anchor="end" textLength="14.00" lengthAdjust="spacingAndGlyphs" fill="#000">80</text>
<path d="M310.5 807.5H317.0" stroke="#000" stroke-width="1"/>
<text x="304.50" y="811.20" font-size="11.4" text-anchor="end" textLength="14.00" lengthAdjust="spacingAndGlyphs" fill="#000">60</text>
<path d="M310.5 844.5H317.0" stroke="#000" stroke-width="1"/>
<text x="304.50" y="848.20" font-size="11.4" text-anchor="end" textLength="14.00" lengthAdjust="spacingAndGlyphs" fill="#000">40</text>
<path d="M310.5 880.5H317.0" stroke="#000" stroke-width="1"/>
<text x="304.50" y="884.20" font-size="11.4" text-anchor="end" textLength="14.00" lengthAdjust="spacingAndGlyphs" fill="#000">20</text>
<path d="M310.5 916.5H317.0" stroke="#000" stroke-width="1"/>
<text x="304.50" y="920.20" font-size="11.4" text-anchor="end" textLength="7.00" lengthAdjust="spacingAndGlyphs" fill="#000">0</text>
<text x="272.50" y="826.00" font-size="12.4" text-anchor="middle" textLength="102.20" lengthAdjust="spacingAndGlyphs" fill="#000" font-weight="bold" transform="rotate(-90 272.50 826.00)">Cpu Usage (%)</text>
<text x="316.20" y="939.70" font-size="11.4" text-anchor="middle" textLength="51.30" lengthAdjust="spacingAndGlyphs" fill="#000">11:10:00</text>
<text x="387.13" y="939.70" font-size="11.4" text-anchor="middle" textLength="51.30" lengthAdjust="spacingAndGlyphs" fill="#000">11:10:35</text>
<text x="458.07" y="939.70" font-size="11.4" text-anchor="middle" textLength="51.30" lengthAdjust="spacingAndGlyphs" fill="#000">11:11:10</text>
<text x="529.00" y="939.70" font-size="11.4" text-anchor="middle" textLength="51.30" lengthAdjust="spacingAndGlyphs" fill="#000">11:11:45</text>
<text x="599.93" y="939.70" font-size="11.4" text-anchor="middle" textLength="51.30" lengthAdjust="spacingAndGlyphs" fill="#000">11:12:20</text>
<text x="670.87" y="939.70" font-size="11.4" text-anchor="middle" textLength="51.30" lengthAdjust="spacingAndGlyphs" fill="#000">11:12:55</text>
<text x="741.80" y="939.70" font-size="11.4" text-anchor="middle" textLength="51.30" lengthAdjust="spacingAndGlyphs" fill="#000">11:13:30</text>
<text x="812.73" y="939.70" font-size="11.4" text-anchor="middle" textLength="51.30" lengthAdjust="spacingAndGlyphs" fill="#000">11:14:05</text>
<text x="883.67" y="939.70" font-size="11.4" text-anchor="middle" textLength="51.30" lengthAdjust="spacingAndGlyphs" fill="#000">11:14:40</text>
<path d="M600.4 706.5H632.4" stroke="#1f77b4" stroke-width="1.3"/>
<text x="637.00" y="710.90" font-size="11.4" text-anchor="start" textLength="20.26" lengthAdjust="spacingAndGlyphs" fill="#000">JVM</text>
<text x="695.00" y="710.90" font-size="11.4" text-anchor="start" textLength="41.94" lengthAdjust="spacingAndGlyphs" fill="#000">32.09%</text>
<path d="M770.2 706.5H802.2" stroke="#aec7e8" stroke-width="1.3"/>
<text x="806.70" y="710.90" font-size="11.4" text-anchor="start" textLength="41.02" lengthAdjust="spacingAndGlyphs" fill="#000">System</text>
<text x="871.70" y="710.90" font-size="11.4" text-anchor="start" textLength="34.94" lengthAdjust="spacingAndGlyphs" fill="#000">68.1%</text>
<path d="M764.5 783.8H817.2V789.1L823.9 795.5L817.2 801.9V806.4H764.5Z" transform="translate(1.6 1.6)" fill="none" stroke="#000" stroke-opacity=".28" stroke-width="2"/>
<path d="M764.5 783.8H817.2V789.1L823.9 795.5L817.2 801.9V806.4H764.5Z" fill="#fff" fill-opacity="0.88" stroke="#aec7e8" stroke-width="2" stroke-linejoin="miter"/>
<text x="774.96" y="799.10" font-size="11.4" text-anchor="start" textLength="34.94" lengthAdjust="spacingAndGlyphs" fill="#000">68.1%</text>
<path d="M757.6 848.9H817.2V853.9L823.9 860.3L817.2 866.7V871.0H757.6Z" transform="translate(1.6 1.6)" fill="none" stroke="#000" stroke-opacity=".28" stroke-width="2"/>
<path d="M757.6 848.9H817.2V853.9L823.9 860.3L817.2 866.7V871.0H757.6Z" fill="#fff" fill-opacity="0.88" stroke="#1f77b4" stroke-width="2" stroke-linejoin="miter"/>
<text x="767.96" y="863.95" font-size="11.4" text-anchor="start" textLength="41.94" lengthAdjust="spacingAndGlyphs" fill="#000">32.09%</text>
<path d="M685.2 921.5H817.8L822.8 916.7L827.8 921.5H922.9V944.3H685.2Z" fill="#000" fill-opacity=".71" stroke="#000" stroke-opacity=".8" stroke-width="1"/>
<text x="804.05" y="936.70" font-size="10.4" text-anchor="middle" textLength="221.00" lengthAdjust="spacingAndGlyphs" fill="#fff" font-weight="bold">Mon Nov 23 2015 11:14:10 GMT+0900</text>
<path d="M1168.5 763.5V916.5" stroke="#000" stroke-opacity=".12" stroke-width="1"/>
<path d="M1173.5 916.5V922.5" stroke="#000" stroke-opacity=".07" stroke-width="1"/>
<path d="M1239.5 763.5V916.5" stroke="#000" stroke-opacity=".12" stroke-width="1"/>
<path d="M1244.5 916.5V922.5" stroke="#000" stroke-opacity=".07" stroke-width="1"/>
<path d="M1309.5 763.5V916.5" stroke="#000" stroke-opacity=".12" stroke-width="1"/>
<path d="M1314.5 916.5V922.5" stroke="#000" stroke-opacity=".07" stroke-width="1"/>
<path d="M1379.5 763.5V916.5" stroke="#000" stroke-opacity=".12" stroke-width="1"/>
<path d="M1384.5 916.5V922.5" stroke="#000" stroke-opacity=".07" stroke-width="1"/>
<path d="M1450.5 763.5V916.5" stroke="#000" stroke-opacity=".12" stroke-width="1"/>
<path d="M1455.5 916.5V922.5" stroke="#000" stroke-opacity=".07" stroke-width="1"/>
<path d="M1520.5 763.5V916.5" stroke="#000" stroke-opacity=".12" stroke-width="1"/>
<path d="M1525.5 916.5V922.5" stroke="#000" stroke-opacity=".07" stroke-width="1"/>
<path d="M1590.5 763.5V916.5" stroke="#000" stroke-opacity=".12" stroke-width="1"/>
<path d="M1595.5 916.5V922.5" stroke="#000" stroke-opacity=".07" stroke-width="1"/>
<path d="M1661.5 763.5V916.5" stroke="#000" stroke-opacity=".12" stroke-width="1"/>
<path d="M1666.5 916.5V922.5" stroke="#000" stroke-opacity=".07" stroke-width="1"/>
<text x="1107.60" y="779.80" font-size="11.4" text-anchor="start" textLength="123.20" lengthAdjust="spacingAndGlyphs" fill="#000" fill-opacity="0.5">JS chart by amCharts</text>
<rect x="1601.8" y="763.5" width="9.4" height="153.0" fill="#000" fill-opacity=".115"/>
<polygon points="1103.5,914.5 1103.5,858.6 1113.5,858.4 1123.6,857.3 1133.7,859.4 1143.7,859.3 1153.8,859.2 1163.8,858.4 1173.8,860.1 1183.9,859.5 1194.0,859.3 1204.0,859.0 1214.0,858.2 1224.1,857.2 1234.2,858.3 1244.2,859.4 1254.2,859.2 1264.3,858.3 1274.3,858.8 1284.4,859.4 1294.5,858.9 1304.5,858.3 1314.5,859.4 1324.6,858.8 1334.7,858.3 1344.7,858.5 1354.8,859.4 1364.8,858.6 1374.8,858.5 1384.9,858.5 1395.0,858.5 1405.0,858.5 1415.0,858.5 1425.1,858.5 1435.2,858.5 1445.2,858.6 1455.2,858.5 1465.3,858.5 1475.3,858.5 1485.4,858.4 1495.5,858.5 1505.5,858.5 1515.5,858.5 1525.6,858.6 1535.7,858.5 1545.7,858.5 1555.8,858.5 1565.8,858.5 1575.8,858.4 1585.9,858.4 1596.0,858.2 1606.0,857.8 1616.1,857.7 1626.1,858.2 1636.2,858.9 1646.2,858.4 1656.2,858.0 1666.3,858.1 1676.3,856.1 1686.4,858.9 1696.5,857.6 1706.5,857.3 1706.5,914.5" fill="#a099ff" fill-opacity=".4"/>
<polyline points="1103.5,858.6 1113.5,858.4 1123.6,857.3 1133.7,859.4 1143.7,859.3 1153.8,859.2 1163.8,858.4 1173.8,860.1 1183.9,859.5 1194.0,859.3 1204.0,859.0 1214.0,858.2 1224.1,857.2 1234.2,858.3 1244.2,859.4 1254.2,859.2 1264.3,858.3 1274.3,858.8 1284.4,859.4 1294.5,858.9 1304.5,858.3 1314.5,859.4 1324.6,858.8 1334.7,858.3 1344.7,858.5 1354.8,859.4 1364.8,858.6 1374.8,858.5 1384.9,858.5 1395.0,858.5 1405.0,858.5 1415.0,858.5 1425.1,858.5 1435.2,858.5 1445.2,858.6 1455.2,858.5 1465.3,858.5 1475.3,858.5 1485.4,858.4 1495.5,858.5 1505.5,858.5 1515.5,858.5 1525.6,858.6 1535.7,858.5 1545.7,858.5 1555.8,858.5 1565.8,858.5 1575.8,858.4 1585.9,858.4 1596.0,858.2 1606.0,857.8 1616.1,857.7 1626.1,858.2 1636.2,858.9 1646.2,858.4 1656.2,858.0 1666.3,858.1 1676.3,856.1 1686.4,858.9 1696.5,857.6 1706.5,857.3" fill="none" stroke="#a099ff" stroke-width="1" stroke-linejoin="round"/>
<rect x="1103.5" y="914.6" width="603.0" height="2.2" fill="#fcb241" fill-opacity=".45"/>
<path d="M1103.5 916.4H1706.5" stroke="#d68d08" stroke-width="1" stroke-opacity=".8"/>
<path d="M1103.5 915.2H1706.5" stroke="#fcb241" stroke-width="1" stroke-opacity=".5"/>
<path d="M1103.5 914.4H1706.5" stroke="#5a67a6" stroke-width="1"/>
<path d="M1103.5 763.5V916.5" stroke="#000" stroke-width="1"/>
<path d="M1097.5 763.5H1104.0" stroke="#000" stroke-width="1"/>
<text x="1091.50" y="767.20" font-size="11.4" text-anchor="end" textLength="23.86" lengthAdjust="spacingAndGlyphs" fill="#000">2.5k</text>
<path d="M1097.5 794.5H1104.0" stroke="#000" stroke-width="1"/>
<text x="1091.50" y="798.20" font-size="11.4" text-anchor="end" textLength="13.37" lengthAdjust="spacingAndGlyphs" fill="#000">2k</text>
<path d="M1097.5 824.5H1104.0" stroke="#000" stroke-width="1"/>
<text x="1091.50" y="828.20" font-size="11.4" text-anchor="end" textLength="23.86" lengthAdjust="spacingAndGlyphs" fill="#000">1.5k</text>
<path d="M1097.5 855.5H1104.0" stroke="#000" stroke-width="1"/>
<text x="1091.50" y="859.20" font-size="11.4" text-anchor="end" textLength="13.37" lengthAdjust="spacingAndGlyphs" fill="#000">1k</text>
<path d="M1097.5 885.5H1104.0" stroke="#000" stroke-width="1"/>
<text x="1091.50" y="889.20" font-size="11.4" text-anchor="end" textLength="21.00" lengthAdjust="spacingAndGlyphs" fill="#000">500</text>
<path d="M1097.5 916.5H1104.0" stroke="#000" stroke-width="1"/>
<text x="1091.50" y="920.20" font-size="11.4" text-anchor="end" textLength="7.00" lengthAdjust="spacingAndGlyphs" fill="#000">0</text>
<text x="1054.30" y="840.00" font-size="12.4" text-anchor="middle" textLength="25.60" lengthAdjust="spacingAndGlyphs" fill="#000" font-weight="bold" transform="rotate(-90 1054.30 840.00)">TPS</text>
<text x="1103.20" y="939.70" font-size="11.4" text-anchor="middle" textLength="51.30" lengthAdjust="spacingAndGlyphs" fill="#000">11:10:00</text>
<text x="1173.55" y="939.70" font-size="11.4" text-anchor="middle" textLength="51.30" lengthAdjust="spacingAndGlyphs" fill="#000">11:10:35</text>
<text x="1243.90" y="939.70" font-size="11.4" text-anchor="middle" textLength="51.30" lengthAdjust="spacingAndGlyphs" fill="#000">11:11:10</text>
<text x="1314.25" y="939.70" font-size="11.4" text-anchor="middle" textLength="51.30" lengthAdjust="spacingAndGlyphs" fill="#000">11:11:45</text>
<text x="1384.60" y="939.70" font-size="11.4" text-anchor="middle" textLength="51.30" lengthAdjust="spacingAndGlyphs" fill="#000">11:12:20</text>
<text x="1454.95" y="939.70" font-size="11.4" text-anchor="middle" textLength="51.30" lengthAdjust="spacingAndGlyphs" fill="#000">11:12:55</text>
<text x="1525.30" y="939.70" font-size="11.4" text-anchor="middle" textLength="51.30" lengthAdjust="spacingAndGlyphs" fill="#000">11:13:30</text>
<text x="1595.65" y="939.70" font-size="11.4" text-anchor="middle" textLength="51.30" lengthAdjust="spacingAndGlyphs" fill="#000">11:14:05</text>
<text x="1666.00" y="939.70" font-size="11.4" text-anchor="middle" textLength="51.30" lengthAdjust="spacingAndGlyphs" fill="#000">11:14:40</text>
<path d="M1135.6 706.3H1167.6" stroke="#d68d08" stroke-width="1.3"/>
<text x="1172.00" y="710.70" font-size="11.4" text-anchor="start" textLength="18.16" lengthAdjust="spacingAndGlyphs" fill="#000">S.C</text>
<text x="1243.90" y="710.70" font-size="11.4" text-anchor="start" textLength="7.00" lengthAdjust="spacingAndGlyphs" fill="#000">0</text>
<path d="M1282.4 706.3H1314.4" stroke="#fcb241" stroke-width="1.3"/>
<text x="1318.80" y="710.70" font-size="11.4" text-anchor="start" textLength="18.71" lengthAdjust="spacingAndGlyphs" fill="#000">S.N</text>
<text x="1383.70" y="710.70" font-size="11.4" text-anchor="start" textLength="14.00" lengthAdjust="spacingAndGlyphs" fill="#000">32</text>
<path d="M1428.3 706.3H1460.3" stroke="#5a67a6" stroke-width="1.3"/>
<text x="1465.00" y="710.70" font-size="11.4" text-anchor="start" textLength="19.23" lengthAdjust="spacingAndGlyphs" fill="#000">U.C</text>
<text x="1536.90" y="710.70" font-size="11.4" text-anchor="start" textLength="7.00" lengthAdjust="spacingAndGlyphs" fill="#000">0</text>
<path d="M1575.8 706.3H1607.8" stroke="#a099ff" stroke-width="1.3"/>
<text x="1612.10" y="710.70" font-size="11.4" text-anchor="start" textLength="19.78" lengthAdjust="spacingAndGlyphs" fill="#000">U.N</text>
<text x="1658.60" y="710.70" font-size="11.4" text-anchor="start" textLength="31.49" lengthAdjust="spacingAndGlyphs" fill="#000">927.6</text>
<text x="1218.80" y="738.60" font-size="11.4" text-anchor="start" textLength="31.49" lengthAdjust="spacingAndGlyphs" fill="#000">959.6</text>
<path d="M1512.0 790.3H1601.0V795.6L1607.4 802.0L1601.0 808.4V813.3H1512.0Z" transform="translate(1.6 1.6)" fill="none" stroke="#000" stroke-opacity=".28" stroke-width="1.2"/>
<path d="M1512.0 790.3H1601.0V795.6L1607.4 802.0L1601.0 808.4V813.3H1512.0Z" fill="#fff" fill-opacity="0.9" stroke="#cfcfcf" stroke-width="1.2" stroke-linejoin="miter"/>
<text x="1522.62" y="805.80" font-size="11.4" text-anchor="start" textLength="71.08" lengthAdjust="spacingAndGlyphs" fill="#000">Total : 959.6</text>
<path d="M1448.9 818.4H1600.2V828.4L1607.0 859.6L1600.2 840.2H1448.9Z" transform="translate(1.6 1.6)" fill="none" stroke="#000" stroke-opacity=".25" stroke-width="2"/>
<path d="M1448.9 818.4H1600.2V828.4L1607.0 859.6L1600.2 840.2H1448.9Z" fill="#fff" fill-opacity="0.88" stroke="#a099ff" stroke-width="2" stroke-linejoin="miter"/>
<text x="1456.42" y="833.30" font-size="11.4" text-anchor="start" textLength="136.48" lengthAdjust="spacingAndGlyphs" fill="#000">Unsampled New : 927.6</text>
<path d="M1426.9 845.5H1600.2V855.5L1607.0 915.5L1600.2 866.8H1426.9Z" transform="translate(1.6 1.6)" fill="none" stroke="#000" stroke-opacity=".25" stroke-width="2"/>
<path d="M1426.9 845.5H1600.2V855.5L1607.0 915.5L1600.2 866.8H1426.9Z" fill="#fff" fill-opacity="0.88" stroke="#5a67a6" stroke-width="2" stroke-linejoin="miter"/>
<text x="1434.40" y="860.15" font-size="11.4" text-anchor="start" textLength="158.50" lengthAdjust="spacingAndGlyphs" fill="#000">Unsampled Continuation : 0</text>
<path d="M1480.0 873.2H1600.2V883.2L1607.0 914.8L1600.2 895.4H1480.0Z" transform="translate(1.6 1.6)" fill="none" stroke="#000" stroke-opacity=".25" stroke-width="2"/>
<path d="M1480.0 873.2H1600.2V883.2L1607.0 914.8L1600.2 895.4H1480.0Z" fill="#fff" fill-opacity="0.88" stroke="#fcb241" stroke-width="2" stroke-linejoin="miter"/>
<text x="1487.69" y="888.30" font-size="11.4" text-anchor="start" textLength="105.21" lengthAdjust="spacingAndGlyphs" fill="#000">Sampled New : 32</text>
<path d="M1440.1 900.6H1600.2V908.3L1606.6 916.3L1600.2 920.8V921.8H1440.1Z" transform="translate(1.6 1.6)" fill="none" stroke="#000" stroke-opacity=".28" stroke-width="2"/>
<path d="M1440.1 900.6H1600.2V908.3L1606.6 916.3L1600.2 920.8V921.8H1440.1Z" fill="#fff" fill-opacity="0.88" stroke="#d68d08" stroke-width="2" stroke-linejoin="miter"/>
<text x="1448.17" y="915.20" font-size="11.4" text-anchor="start" textLength="144.73" lengthAdjust="spacingAndGlyphs" fill="#000">Sampled Continuation : 0</text>
<path d="M1468.4 921.5H1600.9L1605.9 916.7L1610.9 921.5H1705.7V944.5H1468.4Z" fill="#000" fill-opacity=".71" stroke="#000" stroke-opacity=".8" stroke-width="1"/>
<text x="1587.05" y="936.80" font-size="10.4" text-anchor="middle" textLength="221.00" lengthAdjust="spacingAndGlyphs" fill="#fff" font-weight="bold">Mon Nov 23 2015 11:14:10 GMT+0900</text>
</svg>
</body></html>
